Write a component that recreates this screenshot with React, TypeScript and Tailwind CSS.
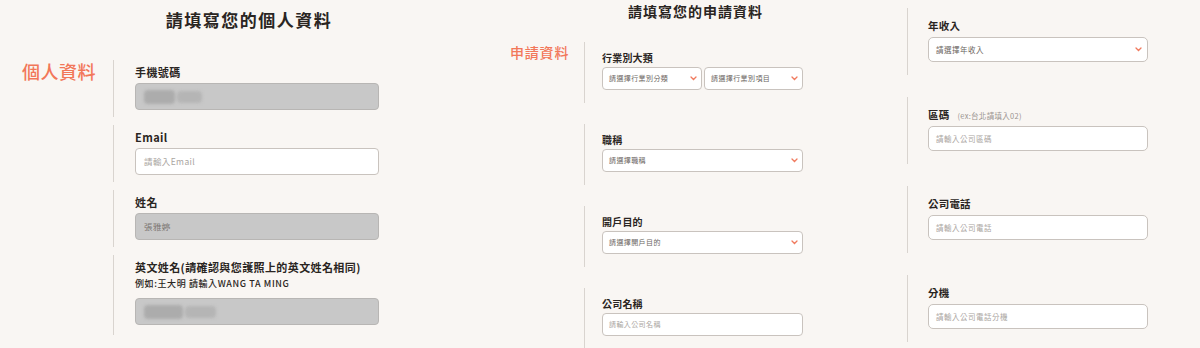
import { ReactNode } from 'react';

const font = { fontFamily: '"Noto Sans CJK TC", "Noto Sans", sans-serif' };

function Chevron() {
  return (
    <svg width="7" height="5" viewBox="0 0 7 5" className="shrink-0">
      <path d="M1 1l2.5 2.5L6 1" fill="none" stroke="#f07a5e" strokeWidth="1.3" strokeLinecap="round" />
    </svg>
  );
}

function Blur({ w }: { w: number }) {
  return (
    <div className="flex items-center gap-[2px] blur-[1.5px]">
      <div className="h-[14px] bg-[#acacac] rounded-sm" style={{ width: w * 0.55 }} />
      <div className="h-[12px] bg-[#b5b5b5] rounded-sm" style={{ width: w * 0.45 }} />
    </div>
  );
}

// ---- left: 個人資料 ----
function PersonalRow({ side, children, bottom = 'pb-[7px]' }: { side?: ReactNode; children: ReactNode; bottom?: string }) {
  return (
    <div className="flex">
      <div className="w-[113px] shrink-0 pl-[22px]">{side}</div>
      <div className="w-px bg-[#d9d4cf]" />
      <div className={`w-[265px] pl-[21px] pt-[5px] ${bottom}`}>{children}</div>
    </div>
  );
}

function PLabel({ children }: { children: ReactNode }) {
  return <div className="text-[11px] leading-[14px] font-bold tracking-[0.4px] text-[#2a2522]">{children}</div>;
}

function PInput({ gray, children }: { gray?: boolean; children?: ReactNode }) {
  return (
    <div
      className={`h-[27px] w-[244px] rounded-[4px] border flex items-center px-[8px] text-[8.5px] tracking-[0.4px] ${
        gray ? 'bg-[#c8c8c8] border-[#b8b6b4] text-[#7a7571]' : 'bg-white border-[#c9c3be] text-[#aaa5a1]'
      }`}
    >
      {children}
    </div>
  );
}

function PersonalColumn() {
  return (
    <div className="w-[490px] shrink-0">
      <div className="h-[60px] pt-[10px] pl-[8px] text-center text-[17px] leading-[20px] font-bold tracking-[1.5px] text-[#2a2522]">
        請填寫您的個人資料
      </div>
      <div className="flex flex-col gap-2">
        <PersonalRow side={<div className="text-[18px] leading-[22px] tracking-[0.5px] font-medium text-[#f27759]">個人資料</div>}>
          <PLabel>手機號碼</PLabel>
          <div className="pt-[4px]">
            <PInput gray>
              <Blur w={56} />
            </PInput>
          </div>
        </PersonalRow>
        <PersonalRow>
          <PLabel>Email</PLabel>
          <div className="pt-[4px]">
            <PInput>請輸入Email</PInput>
          </div>
        </PersonalRow>
        <PersonalRow>
          <PLabel>姓名</PLabel>
          <div className="pt-[4px]">
            <PInput gray>張雅婷</PInput>
          </div>
        </PersonalRow>
        <PersonalRow bottom="pb-[10px]">
          <PLabel>英文姓名(請確認與您護照上的英文姓名相同)</PLabel>
          <div className="pt-[4px] text-[9px] leading-[12px] font-medium tracking-[0.6px] text-[#2a2522]">
            例如:王大明 請輸入WANG TA MING
          </div>
          <div className="pt-[8px]">
            <PInput gray>
              <Blur w={70} />
            </PInput>
          </div>
        </PersonalRow>
      </div>
    </div>
  );
}

// ---- middle: 申請資料 ----
function Select({ text, width }: { text: string; width: string }) {
  return (
    <div className={`${width} h-[23px] bg-white border border-[#c9c3be] rounded-[4px] flex items-center justify-between pl-[6px] pr-[4px]`}>
      <span className="text-[7px] tracking-[0.4px] text-[#6b6561]">{text}</span>
      <Chevron />
    </div>
  );
}

function ApplyRow({ side, label, children }: { side?: ReactNode; label: string; children: ReactNode }) {
  return (
    <div className="flex">
      <div className="w-[94px] shrink-0 pl-[20px]">{side}</div>
      <div className="w-px bg-[#d9d4cf]" />
      <div className="w-[218px] pl-[17px] pt-[10px] pb-[13px]">
        <div className="text-[10px] leading-[12px] font-bold tracking-[0.2px] text-[#2a2522]">{label}</div>
        <div className="pt-[3px]">{children}</div>
      </div>
    </div>
  );
}

function ApplyColumn() {
  return (
    <div className="w-[390px] shrink-0">
      <div className="h-[42px] pt-[2px] pl-[138px] text-[14px] leading-[18px] font-bold tracking-[1px] text-[#2a2522]">
        請填寫您的申請資料
      </div>
      <div className="flex flex-col gap-[21px]">
        <ApplyRow
          label="行業別大類"
          side={<div className="text-[14px] leading-[20px] tracking-[0.8px] font-medium text-[#f27759]">申請資料</div>}
        >
          <div className="flex gap-[2px]">
            <Select text="請選擇行業別分類" width="w-[100px]" />
            <Select text="請選擇行業別項目" width="w-[99px]" />
          </div>
        </ApplyRow>
        <ApplyRow label="職稱">
          <Select text="請選擇職稱" width="w-[201px]" />
        </ApplyRow>
        <ApplyRow label="開戶目的">
          <Select text="請選擇開戶目的" width="w-[201px]" />
        </ApplyRow>
        <ApplyRow label="公司名稱">
          <div className="w-[201px] h-[23px] bg-white border border-[#c9c3be] rounded-[4px] flex items-center pl-[6px] text-[7px] tracking-[0.4px] text-[#aaa5a1]">
            請輸入公司名稱
          </div>
        </ApplyRow>
      </div>
    </div>
  );
}

// ---- right ----
function RightRow({ label, note, children }: { label: string; note?: string; children: ReactNode }) {
  return (
    <div className="flex">
      <div className="w-[27px] shrink-0" />
      <div className="w-px bg-[#d9d4cf]" />
      <div className="w-[241px] pl-[20px] pt-[12px] pb-[13px]">
        <div className="flex items-baseline gap-[8px]">
          <span className="text-[10.5px] leading-[12px] font-bold tracking-[0.2px] text-[#2a2522]">{label}</span>
          {note && <span className="text-[7.5px] tracking-[0.3px] text-[#9a9490]">{note}</span>}
        </div>
        <div className="pt-[5px]">{children}</div>
      </div>
    </div>
  );
}

function RInput({ text, select }: { text: string; select?: boolean }) {
  return (
    <div className="w-[220px] h-[25px] bg-white border border-[#c9c3be] rounded-[5px] flex items-center justify-between pl-[7px] pr-[5px]">
      <span className={`text-[7.5px] tracking-[0.5px] ${select ? 'text-[#6b6561]' : 'text-[#aaa5a1]'}`}>{text}</span>
      {select && <Chevron />}
    </div>
  );
}

function RightColumn() {
  return (
    <div className="flex-1 pt-[8px]">
      <div className="flex flex-col gap-[22px]">
        <RightRow label="年收入">
          <RInput text="請選擇年收入" select />
        </RightRow>
        <RightRow label="區碼" note="(ex:台北請填入02)">
          <RInput text="請輸入公司區碼" />
        </RightRow>
        <RightRow label="公司電話">
          <RInput text="請輸入公司電話" />
        </RightRow>
        <RightRow label="分機">
          <RInput text="請輸入公司電話分機" />
        </RightRow>
      </div>
    </div>
  );
}

export default function App() {
  return (
    <div className="w-[1200px] h-[348px] overflow-hidden bg-[#f9f6f3] flex" style={font}>
      <PersonalColumn />
      <ApplyColumn />
      <RightColumn />
    </div>
  );
}
